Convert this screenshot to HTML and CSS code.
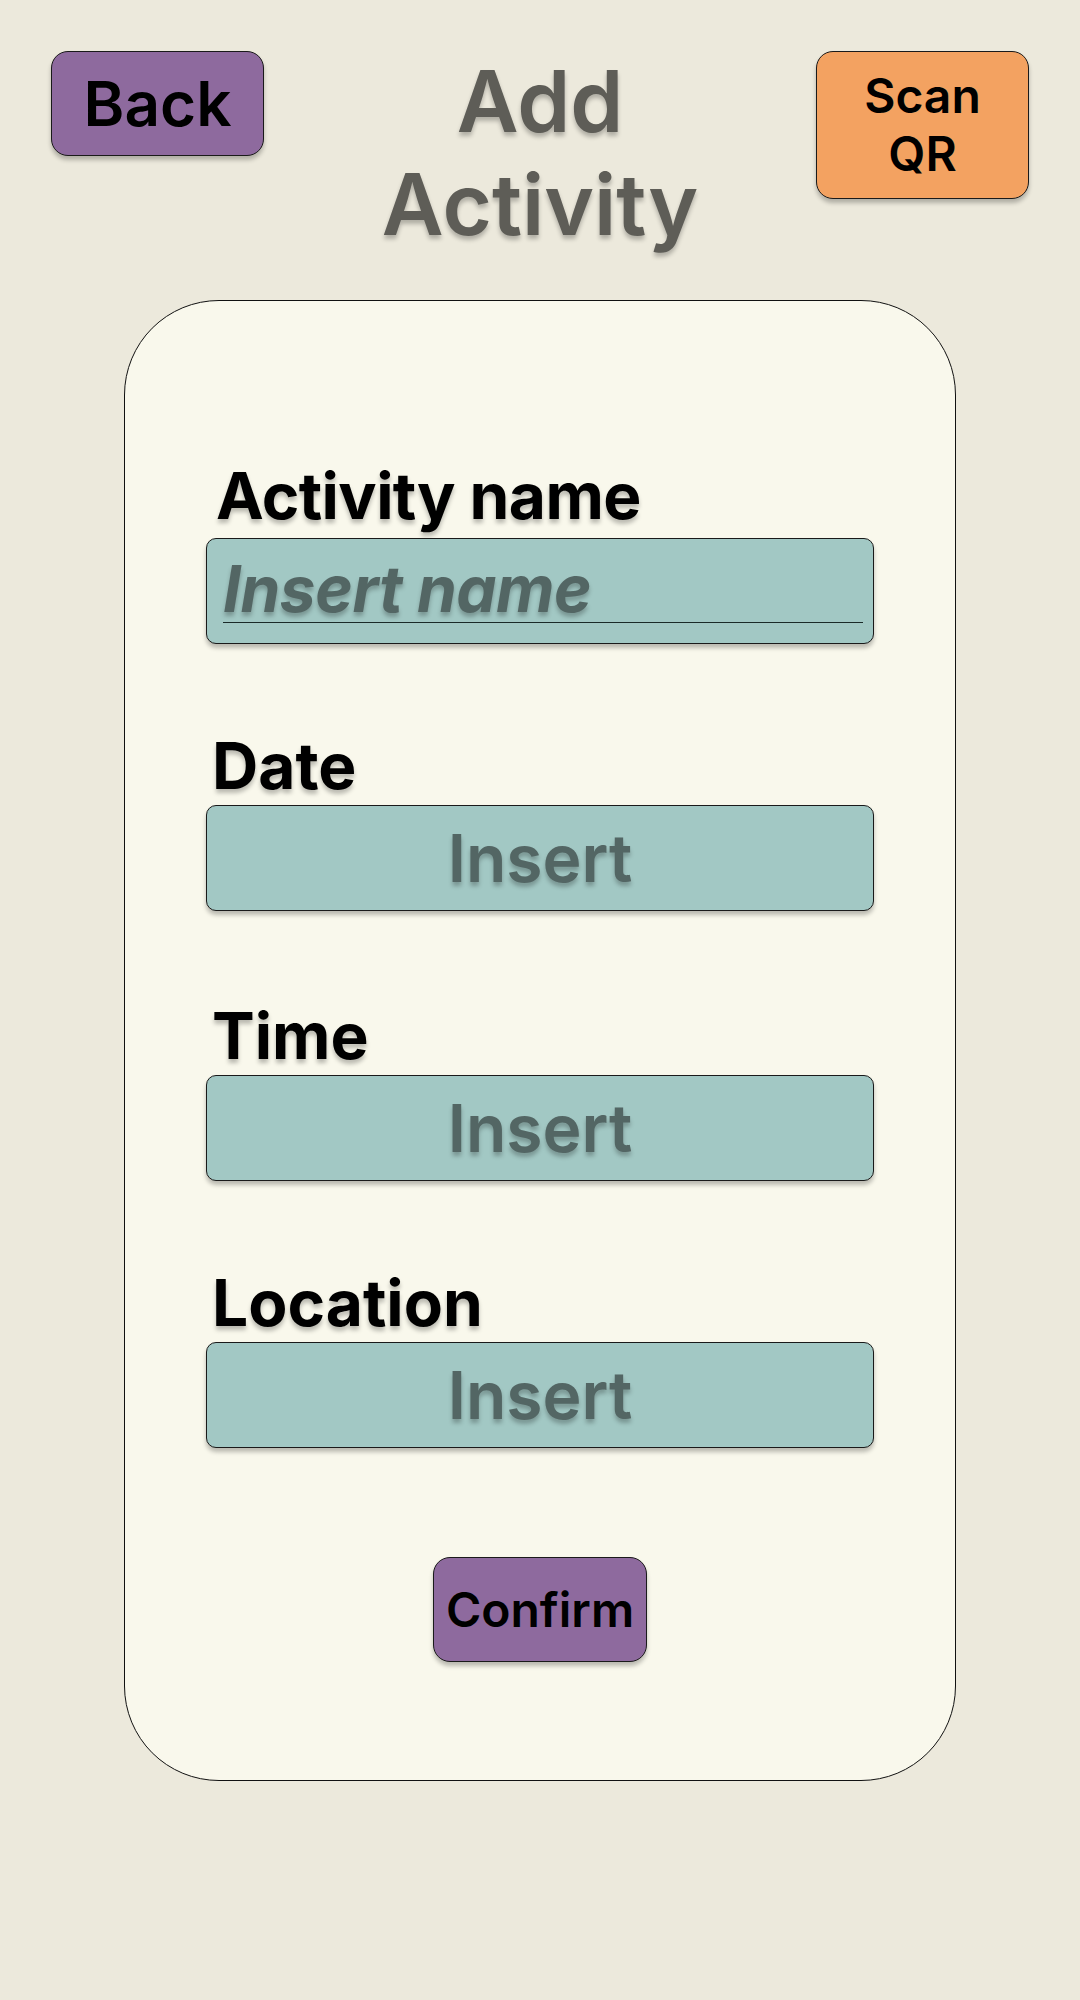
FILE: index.html
```html
<!DOCTYPE html>
<html lang="en">
<head>
<meta charset="utf-8">
<title>Add Activity</title>
<link rel="stylesheet" href="styles.css">
</head>
<body>
<div class="page">
  <header class="header">
    <button class="btn btn-back">Back</button>
    <h1 class="title">Add<br>Activity</h1>
    <button class="btn btn-scan">Scan<br>QR</button>
  </header>
  <main class="card">
    <div class="field field-first">
      <div class="label label-first">Activity name</div>
      <div class="box box-name"><div class="name-line">Insert name</div></div>
    </div>
    <div class="field field-date">
      <div class="label">Date</div>
      <div class="box box-insert">Insert</div>
    </div>
    <div class="field field-time">
      <div class="label">Time</div>
      <div class="box box-insert">Insert</div>
    </div>
    <div class="field">
      <div class="label">Location</div>
      <div class="box box-insert">Insert</div>
    </div>
    <div class="confirm-row">
      <button class="btn btn-confirm">Confirm</button>
    </div>
  </main>
</div>
</body>
</html>
```

FILE: styles.css
```css
* { box-sizing: border-box; }
html, body {
  margin: 0;
  padding: 0;
  background: #ece9dc;
  font-family: Inter, "Noto Sans", "Liberation Sans", sans-serif;
}
.page {
  width: 1080px;
  height: 2000px;
  padding: 51px 51px 0 51px;
}
.header {
  display: flex;
  justify-content: space-between;
  align-items: flex-start;
}
.btn {
  font-family: Inter, "Noto Sans", "Liberation Sans", sans-serif;
  color: #000;
  border: 1px solid #1a1a1a;
  border-radius: 17px;
  box-shadow: 0 4px 4px rgba(0, 0, 0, 0.25);
  padding: 0;
  cursor: pointer;
  display: flex;
  align-items: center;
  justify-content: center;
  text-align: center;
}
.btn-back {
  width: 213px;
  height: 105px;
  background: #8e6a9e;
  font-size: 62px;
  font-weight: 600;
}
.btn-scan {
  width: 213px;
  height: 148px;
  background: #f3a261;
  font-size: 48px;
  font-weight: 600;
  line-height: 58px;
}
.title {
  flex: 1;
  margin: -1px 0 0 0;
  text-align: center;
  font-size: 85px;
  font-weight: 600;
  line-height: 103px;
  color: #5e5d57;
  text-shadow: 0 4px 4px rgba(0, 0, 0, 0.25);
}
.card {
  margin: 44px 0 0 73px;
  width: 832px;
  height: 1481px;
  background: #f9f8ec;
  border: 1px solid #111;
  border-radius: 95px;
  padding: 163px 81px 0 81px;
  display: flex;
  flex-direction: column;
}
.field {
  display: flex;
  flex-direction: column;
  margin-top: 90px;
}
.field-first { margin-top: 0; }
.field-time { margin-top: 93px; }
.label {
  font-size: 64px;
  font-weight: 700;
  line-height: 64px;
  color: #000;
  padding-left: 6px;
  margin-bottom: 7px;
  text-shadow: 0 4px 4px rgba(0, 0, 0, 0.25);
}
.label-first {
  padding-left: 10px;
  margin-bottom: 10px;
  letter-spacing: -0.6px;
}
.box {
  height: 106px;
  background: #a2c8c4;
  border: 1px solid #1a1a1a;
  border-radius: 10px;
  box-shadow: 0 4px 4px rgba(0, 0, 0, 0.25);
  color: #536664;
}
.box-insert {
  display: flex;
  align-items: center;
  justify-content: center;
  font-size: 66px;
  font-weight: 600;
  text-shadow: 0 4px 4px rgba(0, 0, 0, 0.25);
}
.box-name {
  padding: 16px 10px 0 16px;
}
.name-line {
  font-size: 64px;
  font-weight: 700;
  font-style: italic;
  line-height: 67px;
  border-bottom: 1px solid #1a2a28;
  text-shadow: 0 4px 4px rgba(0, 0, 0, 0.25);
  letter-spacing: -0.5px;
}
.confirm-row {
  display: flex;
  justify-content: center;
  margin-top: 109px;
}
.btn-confirm {
  width: 214px;
  height: 105px;
  background: #8e6a9e;
  font-size: 48px;
  font-weight: 600;
}
```
